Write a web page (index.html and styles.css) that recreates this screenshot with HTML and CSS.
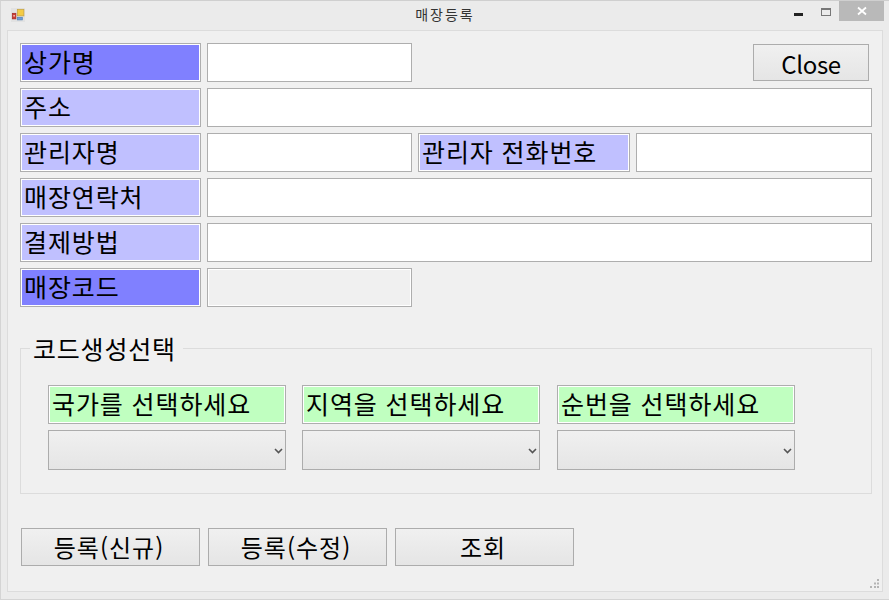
FILE: index.html
```html
<!DOCTYPE html>
<html lang="ko">
<head>
    <meta charset="UTF-8">
    <meta name="viewport" content="width=device-width, initial-scale=1.0">
    <title>매장등록</title>
    <link rel="stylesheet" href="styles.css">
</head>
<body>
    <div class="window">
        <div class="titlebar">
            <svg class="app-icon" width="14" height="14" viewBox="0 0 14 14">
                <rect x="0" y="0" width="14" height="14" fill="#e2e2e2"/>
                <rect x="6.300" y="1.300" width="6.600" height="6.600" fill="#f4cb45" stroke="#c2a040" stroke-width="0.7"/>
                <rect x="1.300" y="5.300" width="3.600" height="5.600" fill="#cf3a32" stroke="#a02a26" stroke-width="0.7"/>
                <rect x="2.400" y="7" width="1.400" height="1.600" fill="#f4d0c8"/>
                <rect x="6.300" y="9.300" width="5" height="2.600" fill="#6f9fd8" stroke="#5080b4" stroke-width="0.7"/>
            </svg>
            <span class="window-title">매장등록</span>
            <div class="window-buttons">
                <span class="btn-min"></span>
                <span class="btn-max"></span>
                <span class="btn-close">
                    <svg width="10" height="10" viewBox="0 0 10 10">
                        <path d="M1 1.500L9 8.500M9 1.500L1 8.500" stroke="#fff" stroke-width="1.800" fill="none"/>
                    </svg>
                </span>
            </div>
        </div>

        <div class="client">
            <div class="form-grid">
                <div class="label label-key">상가명</div>
                <input class="field" type="text">
                <button class="btn btn-close-form" type="button">Close</button>

                <div class="label">주소</div>
                <input class="field span-wide" type="text">

                <div class="label">관리자명</div>
                <input class="field" type="text">
                <div class="label">관리자 전화번호</div>
                <input class="field" type="text">

                <div class="label">매장연락처</div>
                <input class="field span-wide" type="text">

                <div class="label">결제방법</div>
                <input class="field span-wide" type="text">

                <div class="label label-key">매장코드</div>
                <input class="field field-readonly" type="text" readonly>
            </div>

            <fieldset class="code-group">
                <legend class="code-legend">코드생성선택</legend>
                <div class="code-columns">
                    <div class="code-col">
                        <div class="code-label">국가를 선택하세요</div>
                        <div class="combo">
                            <select></select>
                            <svg class="combo-arrow" width="9" height="6" viewBox="0 0 9 6"><path d="M1 1L4.500 4.500L8 1" stroke="#555" stroke-width="1.600" fill="none"/></svg>
                        </div>
                    </div>
                    <div class="code-col">
                        <div class="code-label">지역을 선택하세요</div>
                        <div class="combo">
                            <select></select>
                            <svg class="combo-arrow" width="9" height="6" viewBox="0 0 9 6"><path d="M1 1L4.500 4.500L8 1" stroke="#555" stroke-width="1.600" fill="none"/></svg>
                        </div>
                    </div>
                    <div class="code-col">
                        <div class="code-label">순번을 선택하세요</div>
                        <div class="combo">
                            <select></select>
                            <svg class="combo-arrow" width="9" height="6" viewBox="0 0 9 6"><path d="M1 1L4.500 4.500L8 1" stroke="#555" stroke-width="1.600" fill="none"/></svg>
                        </div>
                    </div>
                </div>
            </fieldset>

            <div class="actions">
                <button class="btn btn-action" type="button">등록(신규)</button>
                <button class="btn btn-action" type="button">등록(수정)</button>
                <button class="btn btn-action" type="button">조회</button>
            </div>

            <svg class="grip" width="10" height="10" viewBox="0 0 10 10">
                <path d="M7 0h2v2H7zM4 3.500h2v2H4zM7 3.500h2v2H7zM0 7h2v2H0zM4 7h2v2H4zM7 7h2v2H7z" fill="#b4b4b4"/>
            </svg>
        </div>
    </div>
</body>
</html>
```

FILE: styles.css
```css
* {
    box-sizing: border-box;
}

html, body {
    margin: 0;
    padding: 0;
}

body {
    width: 889px;
    height: 600px;
    overflow: hidden;
    font-family: "Noto Sans CJK KR", "Noto Sans", sans-serif;
    color: #000;
    background: #ebebeb;
}

.window {
    width: 889px;
    height: 600px;
    border-top: 1px solid #cfcfcf;
    border-left: 1px solid #d4d4d4;
    border-bottom: 1px solid #d4d4d4;
    display: flex;
    flex-direction: column;
    padding: 0 6px 7px 6px;
}

.titlebar {
    height: 29px;
    flex: none;
    display: flex;
    align-items: flex-start;
    position: relative;
}

.app-icon {
    margin: 7px 0 0 4px;
}

.window-title {
    position: absolute;
    left: 0;
    right: 0;
    top: 4px;
    text-align: center;
    font-size: 14px;
    letter-spacing: 2px;
    line-height: 18px;
    color: #333;
}

.window-buttons {
    position: absolute;
    top: 0;
    right: -1px;
    display: flex;
}

.btn-min {
    width: 9px;
    height: 3px;
    background: #222;
    margin: 12px 18px 0 0;
}

.btn-max {
    width: 10px;
    height: 8px;
    border: 1px solid #777;
    border-top-width: 2px;
    margin: 7px 8px 0 0;
}

.btn-close {
    width: 45px;
    height: 20px;
    background: #b9b9b9;
    display: flex;
    align-items: center;
    justify-content: center;
}

.client {
    flex: 1;
    position: relative;
    background: #f0f0f0;
    border: 1px solid #dcdcdc;
    padding: 12px 9px 0 12px;
}

.form-grid {
    display: grid;
    grid-template-columns: 181px 205px 212px 236px;
    grid-auto-rows: 39px;
    column-gap: 6px;
    row-gap: 6px;
    width: 852px;
}

.label {
    background: #c0c0ff;
    border: 1px solid #aeaeae;
    outline: 1px solid #fff;
    outline-offset: -2px;
    font-size: 25px;
    letter-spacing: 0.9px;
    line-height: 34px;
    padding-left: 3px;
    white-space: nowrap;
    overflow: hidden;
}

.label-key {
    background: #8080ff;
}

.field {
    border: 1px solid #aeaeae;
    background: #fff;
    margin: 0;
    padding: 0;
    border-radius: 0;
    outline: none;
}

.span-wide {
    grid-column: 2 / 5;
}

.field-readonly {
    background: #f0f0f0;
    box-shadow: inset 0 0 0 1px #fff;
}

.btn {
    font-family: inherit;
    color: #000;
    border: 1px solid #acacac;
    background: linear-gradient(#f0f0f0, #e5e5e5);
    border-radius: 0;
    padding: 0;
    margin: 0;
    font-size: 24px;
}

.btn-close-form {
    grid-column: 4;
    justify-self: end;
    width: 116px;
    height: 37px;
    margin: 1px 3px 0 0;
    padding-top: 1px;
    letter-spacing: -0.3px;
}

.code-group {
    width: 852px;
    height: 160px;
    margin: 27px 0 0 0;
    padding: 0 0 0 27px;
    border: 1px solid #dcdcdc;
    min-width: 0;
}

.code-legend {
    margin-left: -18px;
    padding: 0 7px 0 3px;
    font-size: 25px;
    letter-spacing: 0.8px;
    line-height: 28px;
}

.code-columns {
    display: flex;
    gap: 16px;
    margin-top: 23px;
}

.code-col {
    width: 238px;
    display: flex;
    flex-direction: column;
    gap: 6px;
}

.code-col:last-child {
    margin-left: 1px;
}

.code-label {
    height: 39px;
    background: #c0ffc0;
    border: 1px solid #aeaeae;
    outline: 1px solid #fff;
    outline-offset: -2px;
    font-size: 25px;
    letter-spacing: 0.9px;
    line-height: 35px;
    padding-left: 3px;
    white-space: nowrap;
}

.combo {
    position: relative;
    height: 40px;
}

.combo select {
    display: block;
    appearance: none;
    width: 100%;
    height: 100%;
    border: 1px solid #acacac;
    border-radius: 0;
    background: linear-gradient(#f0f0f0, #e5e5e5);
}

.combo-arrow {
    position: absolute;
    right: 3px;
    top: 18px;
}

.actions {
    display: flex;
    gap: 8px;
    margin: 34px 0 0 1px;
}

.btn-action {
    width: 179px;
    height: 38px;
    letter-spacing: 1px;
    padding-bottom: 3px;
    padding-right: 3px;
}

.grip {
    position: absolute;
    right: 2px;
    bottom: 2px;
}
```
